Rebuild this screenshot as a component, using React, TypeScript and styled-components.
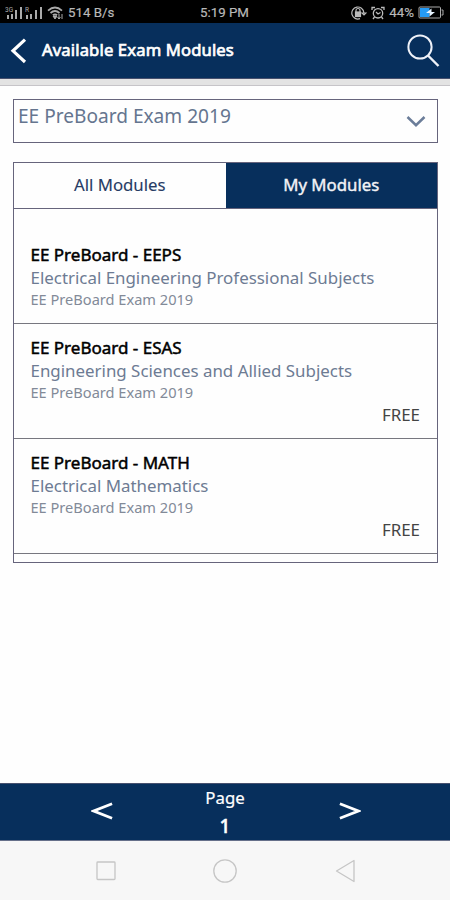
import React from "react";
import styled, { createGlobalStyle } from "styled-components";

const navy = "#072f5c";
const line = "#66647c";

const GlobalStyle = createGlobalStyle`
  * {
    box-sizing: border-box;
  }

  body {
    margin: 0;
    background: #fefefe;
    font-family: "Noto Sans", "Open Sans", sans-serif;
  }

  button {
    font: inherit;
    border: 0;
    padding: 0;
    background: none;
    color: inherit;
  }
`;

let Screen = styled.div`
  display: flex;
  flex-direction: column;
  width: 450px;
  height: 900px;
  overflow: hidden;
`;

let StatusBar = styled.div`
  display: grid;
  grid-template-columns: 1fr auto 1fr;
  align-items: center;
  flex: none;
  height: 23px;
  padding: 2px 6px 0 5px;
  background: #000;
  color: #b9b9b9;
  font: 13.3px/20px Roboto, sans-serif;
  -webkit-text-stroke: 0.2px #b9b9b9;
  white-space: nowrap;
`;

let StatusGroup = styled.div<{ $end?: boolean }>`
  display: flex;
  align-items: center;
  justify-content: ${(p) => (p.$end ? "flex-end" : "flex-start")};
  gap: 4px;

  svg {
    flex: none;
    display: block;
    -webkit-text-stroke: 0;
  }
`;

let Header = styled.header`
  display: flex;
  align-items: center;
  flex: none;
  height: 56px;
  padding: 0 10px;
  background: ${navy};
  border-bottom: 1px solid #46506e;
  color: #fff;

  svg {
    display: block;
  }
`;

let Title = styled.h1`
  flex: 1;
  margin: 0 0 2px 14px;
  font-size: 16.6px;
  line-height: 24px;
  font-weight: 400;
  letter-spacing: 0.15px;
  -webkit-text-stroke: 0.7px #fff;
`;

let Shadow = styled.div`
  flex: none;
  height: 7px;
  background: #e3e3e3;
  border-bottom: 1px solid #c6c4c8;
`;

let Content = styled.main`
  flex: 1;
  padding: 13px 12px 0 13px;
`;

let Select = styled.button`
  display: flex;
  justify-content: space-between;
  width: 100%;
  height: 44px;
  padding: 0 11px 0 4px;
  border: 1px solid ${line};
  color: #65758f;
  font-size: 19.1px;
  line-height: 33px;

  svg {
    margin-top: 15px;
  }
`;

let Panel = styled.section`
  margin-top: 19px;
  height: 401px;
  border: 1px solid ${line};
`;

let Tabs = styled.div`
  display: grid;
  grid-template-columns: 1fr 1fr;
  height: 46px;
  border-bottom: 1px solid ${line};
`;

let Tab = styled.button<{ $active?: boolean }>`
  padding-bottom: 3px;
  background: ${(p) => (p.$active ? navy : "transparent")};
  color: ${(p) => (p.$active ? "#f2f2f6" : "#273b64")};
  font-size: 16.8px;
  -webkit-text-stroke: ${(p) => (p.$active ? 0.4 : 0.1)}px;
`;

let Row = styled.article`
  display: flex;
  flex-direction: column;
  height: 115px;
  padding: 12px 17px 0 16.5px;
  border-bottom: 1px solid #77777f;

  &:first-of-type {
    padding-top: 34px;
  }
`;

let Name = styled.h2`
  margin: 0;
  font-size: 17px;
  line-height: 24px;
  font-weight: 400;
  color: #000;
  -webkit-text-stroke: 0.5px #000;
`;

let Subject = styled.p`
  margin: 0;
  font-size: 16.9px;
  line-height: 22px;
  color: #6d7b93;
`;

let Exam = styled.p`
  margin: 0;
  font-size: 14.6px;
  line-height: 21px;
  color: #828a98;
`;

let Price = styled.span`
  align-self: flex-end;
  font-size: 16.9px;
  line-height: 23px;
  color: #444;
`;

let Pager = styled.footer`
  display: grid;
  grid-template-columns: 202px 46px 202px;
  align-items: center;
  flex: none;
  height: 58px;
  background: ${navy};
  border-top: 1px solid #46506e;
  border-bottom: 1px solid #66708a;
  color: #fff;

  svg {
    display: block;
  }
`;

let PageStep = styled.button<{ $next?: boolean }>`
  display: flex;
  justify-content: ${(p) => (p.$next ? "flex-start" : "flex-end")};
  padding: 0 89px 2px 91px;
`;

let PageNumber = styled.div`
  text-align: center;
  font-size: 16.8px;
  line-height: 28px;
  -webkit-text-stroke: 0.2px #fff;

  strong {
    display: block;
    font-size: 19px;
    font-weight: 500;
    -webkit-text-stroke: 0.5px #fff;
  }
`;

let SystemNav = styled.nav`
  display: flex;
  align-items: center;
  justify-content: center;
  gap: 97px;
  flex: none;
  height: 59px;
  padding: 0 0 0 2px;
  background: #f7f7f7;

  svg {
    display: block;
    fill: none;
    stroke: #c6c6c6;
    stroke-width: 1.3;
  }
`;

const SignalIcon = () => (
  <svg width="38" height="14" viewBox="0 0 38 14" fill="#aaa">
    <text x="0" y="6" fontSize="6.5" fontFamily="Roboto">
      3G
    </text>
    <path d="M2 9h2v4H2zM6 8h2v5H6zM10 4h2v9h-2zM15 1h2v12h-2z" />
    <text x="20" y="6" fontSize="6.5" fontFamily="Roboto">
      R
    </text>
    <path d="M21 9h2v4h-2zM25 8h2v5h-2zM30 4h2v9h-2zM35 1h2v12h-2z" />
  </svg>
);

const WifiIcon = () => (
  <svg width="17" height="14" viewBox="0 0 17 14" fill="none" stroke="#aaa" strokeWidth="1.7">
    <path d="M1 4.6Q8 -1.6 15 4.6M3.5 7Q8 3 12.5 7M5.8 9.2Q8 7.4 10.2 9.2" />
    <path d="M6 10h4l-2 3zM12 8v5M10.5 11.5L12 13l1.5-1.5M15 13V8" strokeWidth="1" fill="#aaa" />
  </svg>
);

const LockIcon = () => (
  <svg width="16" height="14" viewBox="0 0 16 14" fill="none" stroke="#bbb" strokeWidth="1.2">
    <path d="M9 12.6A6 6 0 1 1 12.8 6.5M11 7l2 2 2-2z" />
    <path d="M5 6V4.5a2 2 0 0 1 4 0V6" />
    <rect x="4.5" y="6" width="5" height="4.5" fill="#bbb" />
  </svg>
);

const AlarmIcon = () => (
  <svg width="14" height="14" viewBox="0 0 14 14" fill="none" stroke="#bbb" strokeWidth="1.3">
    <circle cx="7" cy="7.3" r="4.7" />
    <path d="M1 4V1.5h3M13 4V1.5h-3M5 6l2 2 2.5-1.5M3.5 11L2 13M10.5 11l1.5 2" />
  </svg>
);

const BatteryIcon = () => (
  <svg width="26" height="13" viewBox="0 0 26 13">
    <rect x="1" y="1" width="21.5" height="11" rx="1" fill="none" stroke="#aaa" />
    <path d="M23.5 4h1.5v5h-1.5" fill="none" stroke="#aaa" />
    <path d="M2 2h9.5v9H2z" fill="#259bf5" />
    <path d="M13.5 2.5L8 7h3.5v3.5L17 6h-3.5z" fill="#e8f4ff" />
  </svg>
);

const modules = [
  { name: "EE PreBoard - EEPS", subject: "Electrical Engineering Professional Subjects" },
  { name: "EE PreBoard - ESAS", subject: "Engineering Sciences and Allied Subjects", price: "FREE" },
  { name: "EE PreBoard - MATH", subject: "Electrical Mathematics", price: "FREE" },
];

const App = () => {
  return (
    <Screen>
      <GlobalStyle />
      <StatusBar>
        <StatusGroup>
          <SignalIcon />
          <WifiIcon />
          <span>514 B/s</span>
        </StatusGroup>
        <span>5:19 PM</span>
        <StatusGroup $end>
          <LockIcon />
          <AlarmIcon />
          <span>44%</span>
          <BatteryIcon />
        </StatusGroup>
      </StatusBar>
      <Header>
        <svg width="18" height="28" viewBox="0 0 18 28" fill="none" stroke="#fff" strokeWidth="3.2">
          <path d="M15 2.6L3 13.8l12 11.2" />
        </svg>
        <Title>Available Exam Modules</Title>
        <svg width="34" height="34" viewBox="0 0 34 34" fill="none" stroke="#eef1f8" strokeWidth="2">
          <circle cx="14" cy="13" r="11.6" />
          <path d="M22 21.5l10.5 10.5" strokeWidth="2.4" />
        </svg>
      </Header>
      <Shadow />
      <Content>
        <Select>
          EE PreBoard Exam 2019
          <svg width="20" height="14" viewBox="0 0 20 14" fill="none" stroke="#6b7d99" strokeWidth="2.5">
            <path d="M1.5 2L10 10.2 18.5 2" />
          </svg>
        </Select>
        <Panel>
          <Tabs>
            <Tab>All Modules</Tab>
            <Tab $active>My Modules</Tab>
          </Tabs>
          {modules.map((m) => (
            <Row key={m.name}>
              <Name>{m.name}</Name>
              <Subject>{m.subject}</Subject>
              <Exam>EE PreBoard Exam 2019</Exam>
              {m.price && <Price>{m.price}</Price>}
            </Row>
          ))}
        </Panel>
      </Content>
      <Pager>
        <PageStep aria-label="Previous page">
          <svg width="24" height="20" viewBox="0 0 24 20" fill="none" stroke="#fff" strokeWidth="3">
            <path d="M23 2L3 10l20 8" />
          </svg>
        </PageStep>
        <PageNumber>
          Page
          <strong>1</strong>
        </PageNumber>
        <PageStep $next aria-label="Next page">
          <svg width="24" height="20" viewBox="0 0 24 20" fill="none" stroke="#fff" strokeWidth="3">
            <path d="M1 2l20 8L1 18" />
          </svg>
        </PageStep>
      </Pager>
      <SystemNav>
        <svg width="20" height="20" viewBox="0 0 20 20">
          <rect x="1" y="1" width="18" height="17.5" rx="0.8" />
        </svg>
        <svg width="24" height="24" viewBox="0 0 24 24">
          <circle cx="12" cy="12" r="11.2" />
        </svg>
        <svg width="22" height="24" viewBox="0 0 22 24" strokeLinejoin="round">
          <path d="M20 1.5v21L2.5 12z" />
        </svg>
      </SystemNav>
    </Screen>
  );
};

export default App;
